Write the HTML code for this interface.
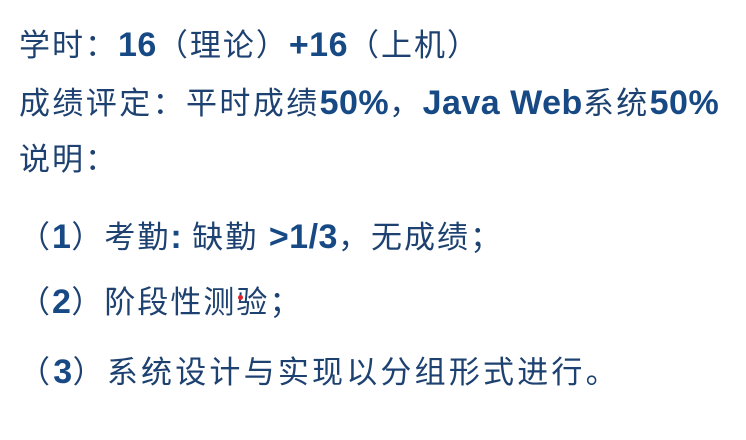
<!DOCTYPE html>
<html><head><meta charset="utf-8"><style>
html,body{margin:0;padding:0;background:#fff;}
body{width:746px;height:440px;position:relative;overflow:hidden;}
.l{position:absolute;left:19px;white-space:nowrap;font-family:"Liberation Sans","Noto Sans CJK SC",sans-serif;font-size:31px;letter-spacing:2px;color:#1d4170;line-height:40px;}
b{font-weight:bold;font-size:34px;letter-spacing:0.5px;color:#174a85;}
.dot{position:absolute;left:238px;top:295px;width:5px;height:5px;border-radius:50%;background:#e0202a;}
</style></head><body>
<div class="l" style="top:25px">学时：<b>16</b>（理论）<b>+16</b>（上机）</div>
<div class="l" style="top:83px;letter-spacing:2.4px">成绩评定：平时成绩<b>50%</b>，<b>Java Web</b>系统<b>50%</b></div>
<div class="l" style="top:140px">说明：</div>
<div class="l" style="top:217px">（<b>1</b>）考勤<b>: </b>缺勤 <b>&gt;1/3</b>，无成绩；</div>
<div class="l" style="top:282px">（<b>2</b>）阶段性测验；</div>
<div class="l" style="top:352px;letter-spacing:3.2px">（<b>3</b>）系统设计与实现以分组形式进行。</div>
<div class="dot"></div>
</body></html>
